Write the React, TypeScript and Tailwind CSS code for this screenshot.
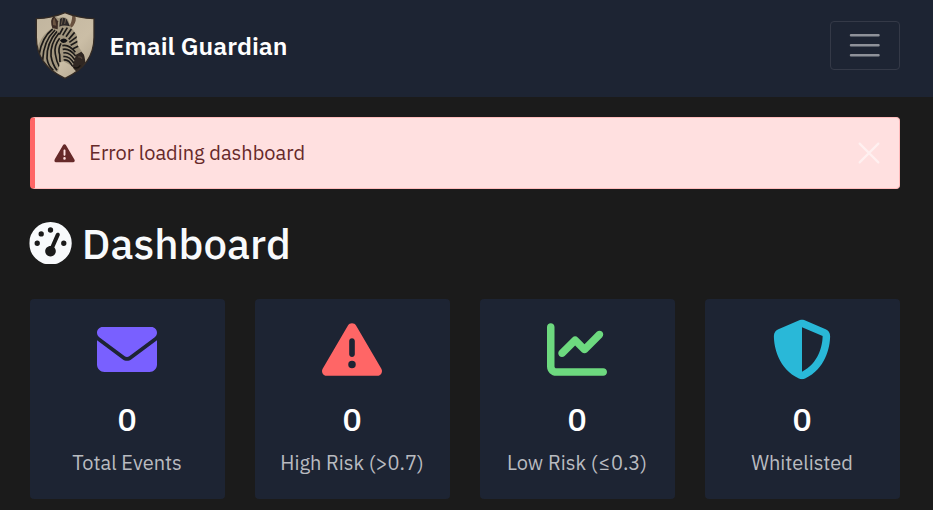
import React from "react";
import {
  FaChartLine,
  FaEnvelope,
  FaGaugeHigh,
  FaShieldHalved,
  FaTriangleExclamation,
} from "react-icons/fa6";

function ZebraShield() {
  return (
    <svg viewBox="90 18 210 228" className="h-[76px] w-[70px] shrink-0" aria-hidden="true">
      <defs>
        <clipPath id="shield">
          <path d="M195 38 Q235 55 282 56 V112 C282 172 246 212 195 235 C144 212 109 172 109 112 V56 Q156 55 195 38Z" />
        </clipPath>
        <linearGradient id="paper" x1="0" y1="0" x2="1" y2="1">
          <stop offset="0" stopColor="#c0b49e" />
          <stop offset="0.6" stopColor="#cbbea6" />
          <stop offset="1" stopColor="#a99c86" />
        </linearGradient>
        <clipPath id="zebra">
          <path d="M157 84 Q148 56 162 48 L176 55 Q190 46 204 58 L212 80 L229 103 L234 138 L252 164 L257 188 L246 212 L228 214 L212 196 L190 184 L180 188 L174 216 L150 212 L110 160 L116 132 Q130 100 157 84Z" />
        </clipPath>
      </defs>
      <g clipPath="url(#shield)">
        <rect x="100" y="30" width="190" height="212" fill="url(#paper)" />
        <path d="M206 82 Q216 68 217 46 Q229 44 227 62 Q222 80 210 85Z" fill="#69513f" />
        <g clipPath="url(#zebra)">
          <rect x="100" y="30" width="190" height="212" fill="#a2967f" />
          <g fill="none" stroke="#1b1918" strokeWidth="5">
            <path d="M158 87 Q125 113 117 165" />
            <path d="M165 90 Q130 124 128 180" />
            <path d="M171 94 Q139 130 141 175 Q144 197 160 211" />
            <path d="M177 99 Q150 132 153 168 Q157 193 171 211" />
            <path d="M179 115 Q161 138 166 162 Q169 184 178 200" />
            <path d="M183 130 Q173 147 179 164 L180 186" />
            <path d="M187 137 Q207 132 226 157" />
            <path d="M188 148 Q208 143 227 168" />
            <path d="M190 159 Q208 154 225 180" />
            <path d="M190 170 Q206 166 222 190" />
            <path d="M191 180 Q206 176 218 200" />
            <path d="M178 104 L189 84" />
            <path d="M188 106 L202 83" />
            <path d="M198 110 L214 87" />
            <path d="M206 118 L224 97" />
            <path d="M208 127 L232 109" />
            <path d="M212 136 L236 122" />
            <path d="M219 146 L240 136" />
          </g>
          <path d="M153 83 Q148 58 162 48 L174 64 L173 88Z" fill="#3c2b24" />
          <path d="M159 75 Q157 57 164 54 L169 77Z" fill="#6b5441" />
          <path d="M178 80 L180 57 Q190 49 200 58 L210 79 Q190 73 178 80Z" fill="#2b2727" />
          <path d="M184 74 L188 54 M194 72 L197 57" stroke="#796955" strokeWidth="2.5" />
          <path d="M180 121 Q192 110 203 122 Q194 132 184 127Z" fill="#111114" />
          <path d="M228 164 L244 155 Q263 171 257 186 Q251 214 232 216 Q216 211 219 196Z" fill="#302722" />
          <path d="M235 171 Q242 169 246 176" fill="none" stroke="#57483c" strokeWidth="4" />
          <path d="M222 202 Q233 208 241 196" fill="none" stroke="#15120f" strokeWidth="4" />
        </g>
      </g>
      <path
        d="M195 38 Q235 55 282 56 V112 C282 172 246 212 195 235 C144 212 109 172 109 112 V56 Q156 55 195 38Z"
        fill="none"
        stroke="#332a24"
        strokeWidth="4"
      />
    </svg>
  );
}

const stats = [
  { label: "Total Events", Icon: FaEnvelope, color: "text-[#7960ff]" },
  { label: "High Risk (>0.7)", Icon: FaTriangleExclamation, color: "text-[#ff6666]" },
  {
    label: (
      <>
        Low Risk (<span className="px-[0.75px]">≤</span>0.3)
      </>
    ),
    Icon: FaChartLine,
    color: "text-[#6dd97f]",
  },
  { label: "Whitelisted", Icon: FaShieldHalved, color: "text-[#29b8d8]" },
];

export default function App() {
  return (
    <div className="h-[510px] w-full overflow-hidden bg-[#1b1b1b] font-['IBM_Plex_Sans','Noto_Sans',sans-serif] text-white">
      <header className="flex h-[97px] items-center justify-between bg-[#1d2433] pr-[33px] pl-[30px]">
        <div className="flex h-[88px] items-start pt-px">
          <ZebraShield />
          <span className="ml-[9.5px] pt-[21px] text-[25px] leading-[37px] font-semibold whitespace-nowrap">Email Guardian</span>
        </div>
        <button aria-label="Menu" className="mb-[7px] flex h-[49px] w-[70px] items-center justify-center rounded-[4px] border border-[#343947]">
          <svg viewBox="0 0 30 30" className="size-[37.5px] translate-y-[0.5px]" fill="none" stroke="#8e9199" strokeLinecap="round" strokeWidth="2">
            <path d="M4 7h22M4 15h22M4 23h22" />
          </svg>
        </button>
      </header>
      <main className="pt-[20px] pr-[33px] pl-[30px]">
        <div className="flex h-[72px] items-center rounded-[4px] border border-l-[5px] border-[#ffbcbc] border-l-[#ff6666] bg-[#ffe0e0] pr-[19px] pl-[19px] text-[#662929]">
          <FaTriangleExclamation className="size-[20.5px] translate-x-[0.25px]" />
          <span className="ml-[14.75px] text-[20px] leading-[30px] whitespace-nowrap">Error loading dashboard</span>
          <svg viewBox="0 0 20 20" className="ml-auto size-[22px]" stroke="#fff0f0" strokeLinecap="round" strokeWidth="2">
            <path d="M1.5 1.5l17 17M18.5 1.5l-17 17" />
          </svg>
        </div>
        <h1 className="mt-[29px] -ml-[0.75px] flex h-[51px] items-center text-[#f8fafc]">
          <FaGaugeHigh className="mb-[1px] size-[42.5px] translate-x-[0.25px]" />
          <span className="ml-[10px] text-[42px] leading-[51px] font-medium">Dashboard</span>
        </h1>
        <div className="mt-[30px] grid grid-cols-4 gap-[30px]">
          {stats.map(({ label, Icon, color }, i) => (
            <section key={i} className="flex h-[200px] flex-col items-center rounded-[4px] bg-[#1d2433] pt-[20px] pr-px">
              <Icon className={`size-[60px] translate-y-[0.5px] ${color}`} />
              <strong className="mt-[21px] text-[32px] leading-[38px] font-medium">0</strong>
              <span className="mt-[10px] text-[20px] leading-[30px] whitespace-nowrap text-[#b9bbc0]">{label}</span>
            </section>
          ))}
        </div>
      </main>
    </div>
  );
}
